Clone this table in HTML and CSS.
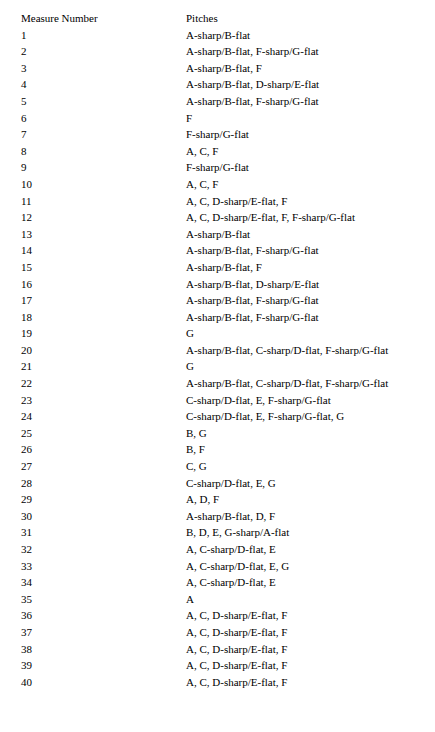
FILE: index.html
```html
<!DOCTYPE html>
<html>
<head>
<meta charset="utf-8">
<link rel="stylesheet" href="styles.css">
</head>
<body>
<table class="pitch-table">
<thead>
<tr><th>Measure Number</th><th>Pitches</th></tr>
</thead>
<tbody>
<tr><td>1</td><td>A-sharp/B-flat</td></tr>
<tr><td>2</td><td>A-sharp/B-flat, F-sharp/G-flat</td></tr>
<tr><td>3</td><td>A-sharp/B-flat, F</td></tr>
<tr><td>4</td><td>A-sharp/B-flat, D-sharp/E-flat</td></tr>
<tr><td>5</td><td>A-sharp/B-flat, F-sharp/G-flat</td></tr>
<tr><td>6</td><td>F</td></tr>
<tr><td>7</td><td>F-sharp/G-flat</td></tr>
<tr><td>8</td><td>A, C, F</td></tr>
<tr><td>9</td><td>F-sharp/G-flat</td></tr>
<tr><td>10</td><td>A, C, F</td></tr>
<tr><td>11</td><td>A, C, D-sharp/E-flat, F</td></tr>
<tr><td>12</td><td>A, C, D-sharp/E-flat, F, F-sharp/G-flat</td></tr>
<tr><td>13</td><td>A-sharp/B-flat</td></tr>
<tr><td>14</td><td>A-sharp/B-flat, F-sharp/G-flat</td></tr>
<tr><td>15</td><td>A-sharp/B-flat, F</td></tr>
<tr><td>16</td><td>A-sharp/B-flat, D-sharp/E-flat</td></tr>
<tr><td>17</td><td>A-sharp/B-flat, F-sharp/G-flat</td></tr>
<tr><td>18</td><td>A-sharp/B-flat, F-sharp/G-flat</td></tr>
<tr><td>19</td><td>G</td></tr>
<tr><td>20</td><td>A-sharp/B-flat, C-sharp/D-flat, F-sharp/G-flat</td></tr>
<tr><td>21</td><td>G</td></tr>
<tr><td>22</td><td>A-sharp/B-flat, C-sharp/D-flat, F-sharp/G-flat</td></tr>
<tr><td>23</td><td>C-sharp/D-flat, E, F-sharp/G-flat</td></tr>
<tr><td>24</td><td>C-sharp/D-flat, E, F-sharp/G-flat, G</td></tr>
<tr><td>25</td><td>B, G</td></tr>
<tr><td>26</td><td>B, F</td></tr>
<tr><td>27</td><td>C, G</td></tr>
<tr><td>28</td><td>C-sharp/D-flat, E, G</td></tr>
<tr><td>29</td><td>A, D, F</td></tr>
<tr><td>30</td><td>A-sharp/B-flat, D, F</td></tr>
<tr><td>31</td><td>B, D, E, G-sharp/A-flat</td></tr>
<tr><td>32</td><td>A, C-sharp/D-flat, E</td></tr>
<tr><td>33</td><td>A, C-sharp/D-flat, E, G</td></tr>
<tr><td>34</td><td>A, C-sharp/D-flat, E</td></tr>
<tr><td>35</td><td>A</td></tr>
<tr><td>36</td><td>A, C, D-sharp/E-flat, F</td></tr>
<tr><td>37</td><td>A, C, D-sharp/E-flat, F</td></tr>
<tr><td>38</td><td>A, C, D-sharp/E-flat, F</td></tr>
<tr><td>39</td><td>A, C, D-sharp/E-flat, F</td></tr>
<tr><td>40</td><td>A, C, D-sharp/E-flat, F</td></tr>
</tbody>
</table>
</body>
</html>
```
FILE: styles.css
```css
html, body {
  margin: 0;
  padding: 0;
  background: #ffffff;
}
body {
  font-family: "Liberation Serif", "Times New Roman", serif;
  font-size: 11px;
  color: #000000;
  padding: 10px 0 0 21px;
}
.pitch-table {
  border-collapse: collapse;
  border-spacing: 0;
}
.pitch-table th,
.pitch-table td {
  padding: 0;
  text-align: left;
  font-weight: normal;
  line-height: 16.6px;
  height: 16.6px;
  vertical-align: top;
  white-space: nowrap;
}
.pitch-table th:first-child,
.pitch-table td:first-child {
  width: 165px;
}
```
